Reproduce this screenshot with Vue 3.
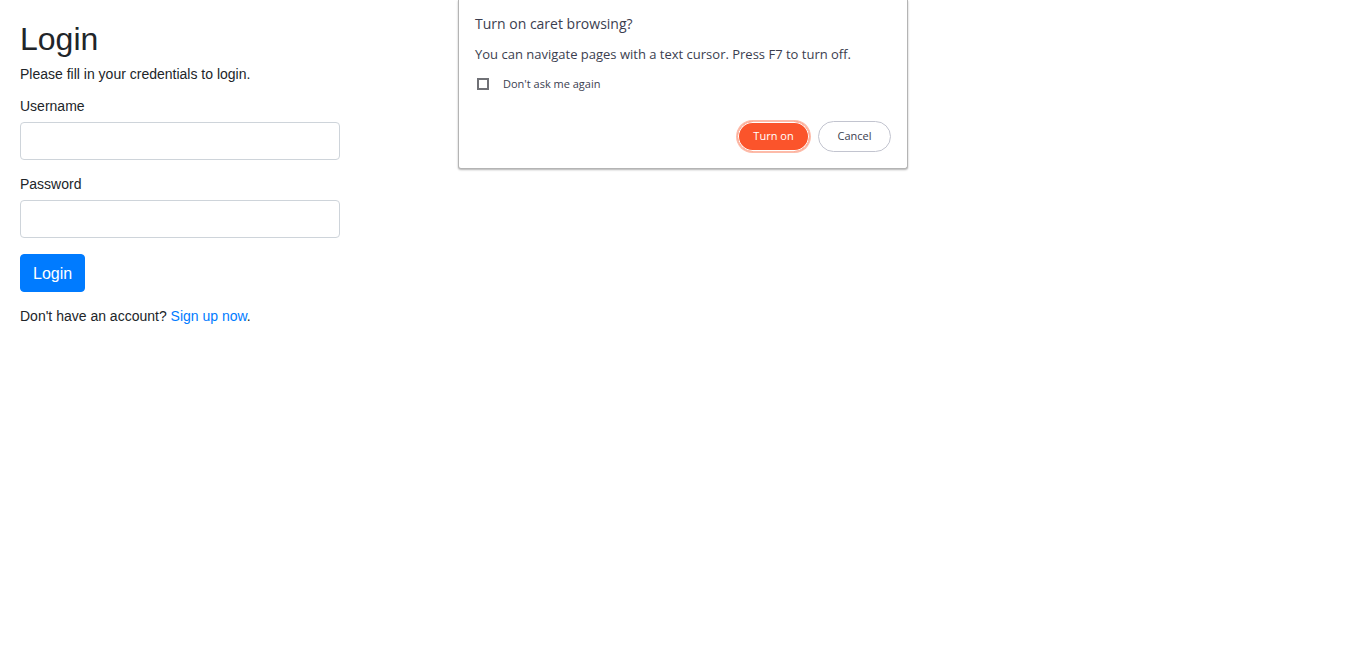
<script setup>
import { ref } from 'vue'

const username = ref('')
const password = ref('')
const dontAsk = ref(false)
</script>

<template>
  <main class="login">
    <h2>Login</h2>
    <p class="intro">Please fill in your credentials to login.</p>
    <form @submit.prevent>
      <div class="group">
        <label for="username">Username</label>
        <input id="username" v-model="username" type="text" class="field" />
      </div>
      <div class="group">
        <label for="password">Password</label>
        <input id="password" v-model="password" type="password" class="field" />
      </div>
      <button type="submit" class="submit">Login</button>
      <p class="signup">Don't have an account? <a href="#">Sign up now</a>.</p>
    </form>
  </main>

  <section class="dialog" role="dialog" aria-labelledby="caret-title">
    <h1 id="caret-title">Turn on caret browsing?</h1>
    <p class="message">You can navigate pages with a text cursor. Press F7 to turn off.</p>
    <label class="ask" for="dont-ask">
      <input id="dont-ask" v-model="dontAsk" type="checkbox" />
      <span>Don't ask me again</span>
    </label>
    <div class="actions">
      <button type="button" class="pill primary">Turn on</button>
      <button type="button" class="pill">Cancel</button>
    </div>
  </section>
</template>

<style>
body {
  background: #fff;
}
</style>

<style scoped>
* {
  box-sizing: border-box;
}

.login {
  width: 360px;
  padding: 20px;
  font-family: "Liberation Sans", Arial, sans-serif;
  font-size: 14px;
  line-height: 21px;
  color: #212529;
}

h2 {
  margin: 0 0 6px;
  font-size: 32px;
  line-height: 38px;
  font-weight: 400;
}

.intro {
  margin: 0 0 11px;
}

.group {
  margin-bottom: 14px;
}

.group label {
  display: block;
  margin-bottom: 5px;
}

.field {
  display: block;
  width: 100%;
  height: 38px;
  padding: 6px 12px;
  font: inherit;
  font-size: 16px;
  border: 1px solid #ced4da;
  border-radius: 4px;
  outline: none;
}

.submit {
  display: block;
  height: 38px;
  margin-top: 16px;
  padding: 0 12px;
  font: inherit;
  font-size: 16px;
  color: #fff;
  background: #007bff;
  border: 1px solid #007bff;
  border-radius: 4px;
}

.signup {
  margin: 14px 0 0;
}

a {
  color: #007bff;
  text-decoration: none;
}

.dialog {
  position: absolute;
  top: 0;
  left: 50%;
  width: 450px;
  transform: translateX(-50%);
  padding: 12px 16px 16px;
  font-family: "Open Sans", "Noto Sans", sans-serif;
  font-size: 11px;
  line-height: 20px;
  color: #3b3e4f;
  background: #fff;
  border: 1px solid #b4b4b4;
  border-top: 0;
  border-radius: 0 0 3px 3px;
  box-shadow: 0 1px 2px rgba(0, 0, 0, 0.3);
}

h1 {
  margin: 0 0 8px;
  font-size: 14px;
  line-height: 24px;
  font-weight: 400;
}

.message {
  margin: 0 0 10px;
  font-size: 13px;
}

.ask {
  display: flex;
  align-items: center;
  gap: 14px;
  padding-left: 2px;
}

.ask input {
  appearance: none;
  width: 12px;
  height: 12px;
  margin: 0;
  border: 2px solid #707176;
}

.actions {
  display: flex;
  justify-content: flex-end;
  gap: 8px;
  margin-top: 27px;
}

.pill {
  height: 31px;
  min-width: 73px;
  padding: 0 14px 2px;
  font: inherit;
  color: #3b3e4f;
  background: #fff;
  border: 1px solid #c2c4cf;
  border-radius: 16px;
}

.primary {
  color: #fff;
  background: #fb542b;
  border-color: #fdbba9;
  box-shadow: 0 0 0 1px #fdbba9, inset 0 0 0 1px #fff;
}
</style>
